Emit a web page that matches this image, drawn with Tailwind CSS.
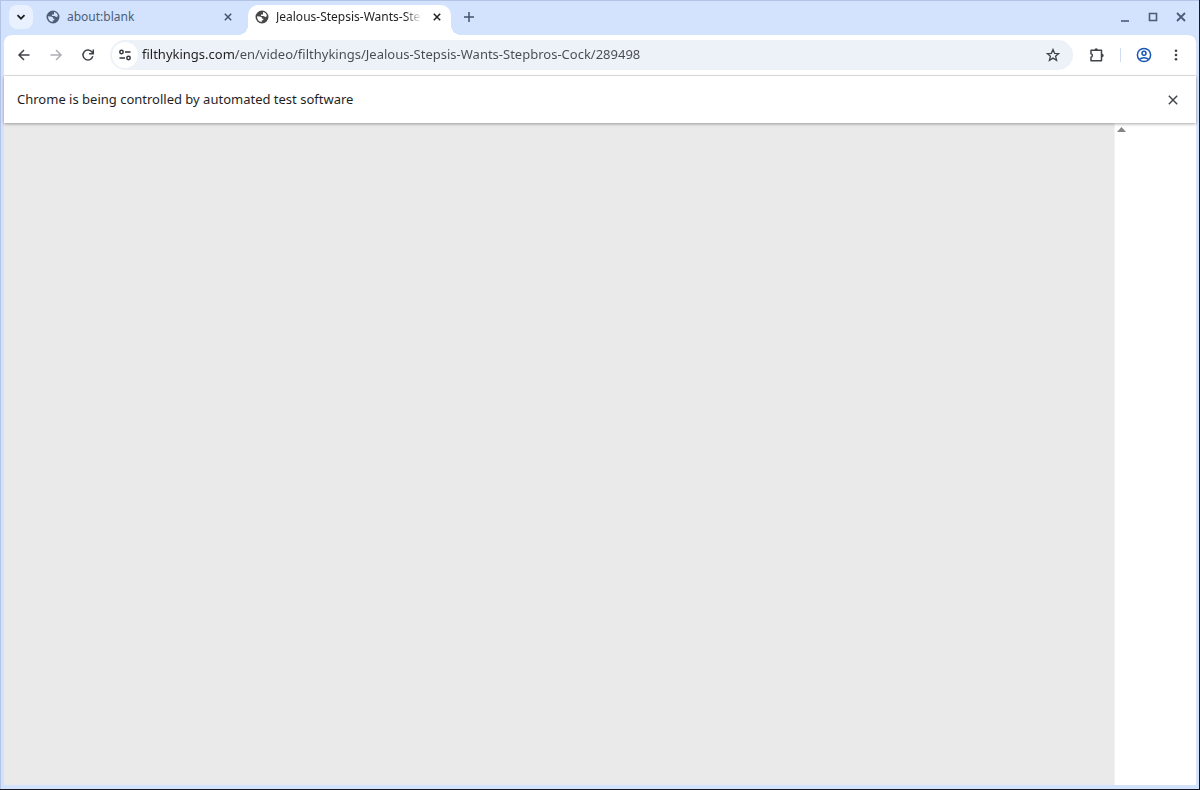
<!doctype html>
<html lang="en">

<head>
  <title>Jealous-Stepsis-Wants-Stepbros-Cock</title>
  <meta charset="UTF-8">
  <meta name="viewport" content="width=device-width, initial-scale=1.0">
  <script src="https://cdn.jsdelivr.net/npm/@tailwindcss/browser@4"></script>
</head>

<body class="flex min-h-screen flex-col border-r border-b border-[#15171c] bg-[#d3e2fd] font-['Noto_Sans','DejaVu_Sans',sans-serif] text-[#1f1f1f]">
  <div class="flex grow flex-col border-t border-l border-[#b3c3e6] pr-[3px] pb-1 pl-[3px]">
    <!-- tab strip -->
    <header class="flex h-[34px] items-end pl-[5px]">
      <button class="mb-[6px] flex size-6 items-center justify-center rounded-lg bg-[#e9f1fe]" aria-label="Search tabs">
        <svg class="size-[10px]" viewBox="0 0 10 10" fill="none" stroke="#1f1f1f" stroke-width="1.8"><path d="M1.5 3.2 5 6.7l3.5-3.5" /></svg>
      </button>
      <nav class="flex items-end">
        <div class="ml-[5px] flex h-[30px] w-[210px] items-center pr-3 pb-[6px] pl-[7px]">
          <svg class="size-4 shrink-0" viewBox="0 0 16 16" fill="#4b5f79"><path fill-rule="evenodd" d="M8 1.500a6.500 6.500 0 1 0 0 13 6.500 6.500 0 0 0 0-13zM9 3.100a5 5 0 0 1 3.900 4c-.5.8-1.200 1-2 .6C10.300 7.300 9.600 7 9 7H7V5.500h1.500c.5 0 .5-.6.500-1zM3.100 7.300l2.400.2c1.500.1 2.700.7 2.700 2.200h1.300c0 1.300-.7 1.700-1.800 1.800v1.500A5 5 0 0 1 3.100 7.300z" /></svg>
          <a href="#" class="ml-[6px] grow text-xs text-[#4b5f79]">about:blank</a>
          <button class="flex size-4 items-center justify-center" aria-label="Close tab">
            <svg class="size-2" viewBox="0 0 8 8" stroke="#41546e" stroke-width="1.500"><path d="m.8.8 6.400 6.400M7.200.8.8 7.200" /></svg>
          </button>
        </div>
        <div class="relative flex h-[30px] w-[203px] items-center rounded-t-[10px] bg-white pb-[6px] pl-[6px]">
          <span class="absolute bottom-0 -left-[10px] size-[10px] bg-[radial-gradient(circle_at_0_0,transparent_10px,white_10px)]"></span>
          <span class="absolute -right-[10px] bottom-0 size-[10px] bg-[radial-gradient(circle_at_100%_0,transparent_10px,white_10px)]"></span>
          <svg class="size-4 shrink-0" viewBox="0 0 16 16" fill="#474747"><path fill-rule="evenodd" d="M8 1.500a6.500 6.500 0 1 0 0 13 6.500 6.500 0 0 0 0-13zM9 3.100a5 5 0 0 1 3.900 4c-.5.8-1.200 1-2 .6C10.300 7.300 9.600 7 9 7H7V5.500h1.500c.5 0 .5-.6.500-1zM3.100 7.300l2.400.2c1.500.1 2.700.7 2.700 2.200h1.300c0 1.300-.7 1.700-1.800 1.800v1.500A5 5 0 0 1 3.100 7.300z" /></svg>
          <a href="#" class="ml-[6px] w-[146px] overflow-hidden mask-r-from-88% text-xs whitespace-nowrap">Jealous-Stepsis-Wants-Stepbros-Cock</a>
          <button class="ml-[7px] flex size-4 items-center justify-center" aria-label="Close tab">
            <svg class="size-2" viewBox="0 0 8 8" stroke="#1f1f1f" stroke-width="1.500"><path d="m.8.8 6.400 6.400M7.200.8.8 7.200" /></svg>
          </button>
        </div>
      </nav>
      <button class="mb-[6px] ml-[6px] flex size-6 items-center justify-center" aria-label="New tab">
        <svg class="size-[10px]" viewBox="0 0 10 10" stroke="#41546e" stroke-width="1.500"><path d="M5 0v10M0 5h10" /></svg>
      </button>
      <div class="mb-[6px] ml-auto flex h-6 items-center gap-1 pr-[3px]">
        <button class="flex size-6 items-center justify-center" aria-label="Minimize">
          <svg class="size-[10px]" viewBox="0 0 10 10" stroke="#4a5d78" stroke-width="1.600"><path d="M1 9h8" /></svg>
        </button>
        <button class="flex size-6 items-center justify-center" aria-label="Maximize">
          <svg class="size-[10px]" viewBox="0 0 10 10" fill="none" stroke="#4a5d78" stroke-width="1.600"><path d="M1.500 1.500h7v7h-7z" /></svg>
        </button>
        <button class="flex size-6 items-center justify-center" aria-label="Close">
          <svg class="size-[10px]" viewBox="0 0 10 10" stroke="#4a5d78" stroke-width="1.800"><path d="m1 1 8 8M9 1 1 9" /></svg>
        </button>
      </div>
    </header>

    <!-- toolbar -->
    <div class="flex h-[41px] items-center rounded-t-lg border-b border-[#e4e6e9] bg-white px-2">
      <div class="flex gap-2">
        <button class="flex size-6 items-center justify-center" aria-label="Back">
          <svg class="size-4" viewBox="0 0 16 16" fill="none" stroke="#404347" stroke-width="1.500"><path d="M13.500 8h-10M8 3 3 8l5 5" /></svg>
        </button>
        <button class="flex size-6 items-center justify-center" aria-label="Forward" disabled>
          <svg class="size-4" viewBox="0 0 16 16" fill="none" stroke="#adafb2" stroke-width="1.500"><path d="M2.500 8h10M8 3l5 5-5 5" /></svg>
        </button>
        <button class="flex size-6 items-center justify-center" aria-label="Reload">
          <svg class="size-4" viewBox="0 0 16 16" fill="none" stroke="#404347" stroke-width="1.500"><path d="M12.800 9.300A5 5 0 1 1 12 5l1 1.300M13.300 2.500v4.200H9.100" /></svg>
        </button>
      </div>
      <form class="ml-[10px] flex h-[30px] grow items-center rounded-full bg-[#edf1f8] pr-2 pl-[2px]">
        <button type="button" class="flex size-[26px] shrink-0 items-center justify-center rounded-full bg-white" aria-label="View site information">
          <svg class="size-3" viewBox="0 0 12 12" fill="none" stroke="#33363a" stroke-width="1.500"><circle cx="2.500" cy="3" r="1.700" /><path d="M6 3h5.500M.5 9H6" /><circle cx="9.500" cy="9" r="1.700" /></svg>
        </button>
        <input type="text" aria-label="Address" value="filthykings.com/en/video/filthykings/Jealous-Stepsis-Wants-Stepbros-Cock/289498" class="ml-1 min-w-0 grow bg-[linear-gradient(90deg,#1f1f1f_93px,#474b50_93px)] bg-clip-text text-[13px] text-transparent outline-none">
        <button type="button" class="flex size-6 items-center justify-center" aria-label="Bookmark this tab">
          <svg class="size-[14px]" viewBox="0 0 14 14" fill="none" stroke="#404347" stroke-width="1.300"><path d="m7 1.500 1.600 3.800 4.100.3-3.100 2.700 1 4L7 10.100l-3.600 2.200 1-4-3.100-2.700 4.100-.3z" /></svg>
        </button>
      </form>
      <button class="ml-3 flex size-6 items-center justify-center" aria-label="Extensions">
        <svg class="size-4" viewBox="0 0 16 16" fill="none" stroke="#404347" stroke-width="1.500" stroke-linejoin="round"><path d="M2 3.200h10.500v10.500H2v-3.500a1.800 1.800 0 0 0 0-3.500z" /><path fill="#404347" stroke="none" d="M5.500 3a1.700 1.700 0 0 1 3.400 0zM13 6.800a1.700 1.700 0 0 1 0 3.400z" /></svg>
      </button>
      <span class="mx-[11px] h-[14px] w-px bg-[#d0dcf0]"></span>
      <button class="flex size-6 items-center justify-center" aria-label="Profile">
        <svg class="size-4" viewBox="0 0 16 16" fill="none" stroke="#1b57b5" stroke-width="1.500"><circle cx="8" cy="8" r="6.600" /><circle cx="8" cy="6.300" r="2" /><path d="M3.300 12.500c2.500-2.300 6.900-2.300 9.400 0" /></svg>
      </button>
      <button class="ml-2 flex size-6 items-center justify-center" aria-label="Menu">
        <svg class="size-3" viewBox="0 0 12 12" fill="#404347"><circle cx="6" cy="1.700" r="1.300" /><circle cx="6" cy="6" r="1.300" /><circle cx="6" cy="10.300" r="1.300" /></svg>
      </button>
    </div>

    <!-- info bar -->
    <div class="z-10 flex h-[47px] items-center justify-between bg-white pr-[11px] pl-[13px] shadow-[0_1px_3px_#00000059]">
      <p class="text-[13px]">Chrome is being controlled by automated test software</p>
      <button class="flex size-6 items-center justify-center" aria-label="Dismiss">
        <svg class="size-[10px]" viewBox="0 0 10 10" stroke="#404347" stroke-width="1.400"><path d="m.8.8 8.400 8.400M9.200.8.8 9.200" /></svg>
      </button>
    </div>

    <!-- page -->
    <main class="flex grow bg-white">
      <div class="grow border-r border-[#f3f3f3] bg-[#eaeaea]"></div>
      <aside class="w-[81px] pt-1 pl-[2px]">
        <svg class="h-[5px] w-[9px]" viewBox="0 0 9 5" fill="#858585"><path d="M0 5 4.500 0 9 5z" /></svg>
      </aside>
    </main>
  </div>
</body>

</html>
